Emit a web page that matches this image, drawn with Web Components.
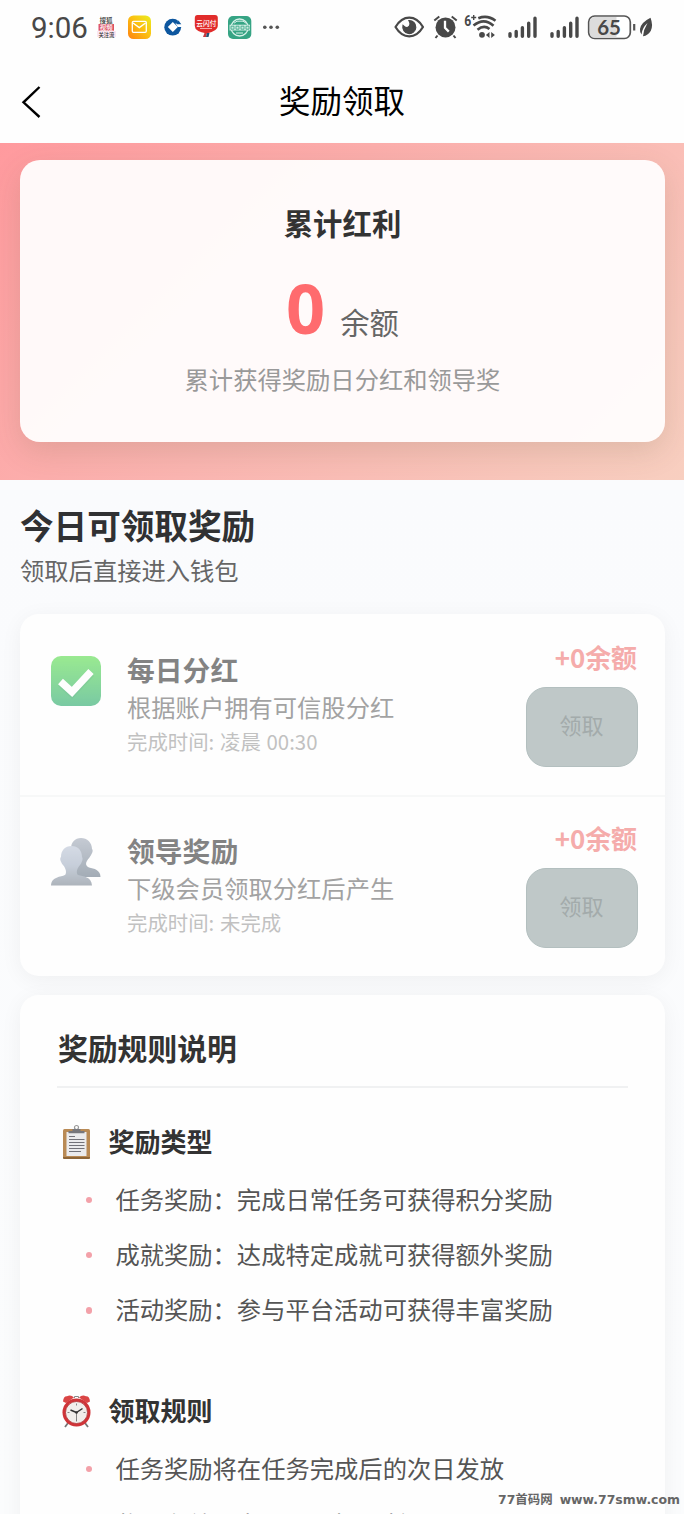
<!DOCTYPE html>
<html lang="zh-CN">
<head>
<meta charset="utf-8">
<title>奖励领取</title>
<style>
html,body{margin:0;height:1514px;overflow:hidden}
body{font-family:"Noto Sans CJK SC","Noto Sans",sans-serif;background:#fafbfd;color:#333}
</style>
</head>
<body>
<reward-page></reward-page>
<script>
function define(name, html) {
  customElements.define(name, class extends HTMLElement {
    constructor() {
      super();
      const t = document.createElement('template');
      t.innerHTML = html;
      this.attachShadow({mode: 'open'}).appendChild(t.content.cloneNode(true));
    }
  });
}

define('status-bar', `
<style>
:host{display:flex;height:54px;justify-content:space-between;align-items:flex-start;padding:0 29px 0 31px;box-sizing:border-box}
.left{display:flex}
.time{font:400 29.5px/54px Roboto,sans-serif;color:#484848;width:60px;margin-top:1px}
svg{display:block}
</style>
<div class="left">
<div class="time">9:06</div>
<svg width="195" height="54" viewBox="91 0 195 54">
  <defs>
    <linearGradient id="m" x1="0" y1="1" x2="1" y2="0"><stop offset="0" stop-color="#ff8210"/><stop offset=".55" stop-color="#fbc211"/><stop offset="1" stop-color="#e9ef22"/></linearGradient>
  </defs>
  <rect x="97" y="31" width="19" height="6" fill="#fbe6f1"/>
  <rect x="98.500" y="24" width="15.500" height="6.700" fill="#dd5264"/>
  <g font-family="Noto Sans CJK SC, sans-serif" font-weight="500">
  <text x="99.500" y="22.900" font-size="6.500" fill="#333">搜狐</text>
  <text x="99.800" y="29.700" font-size="6.400" fill="#fff">视频</text>
  <text x="98.500" y="36.700" font-size="5.300" fill="#333">关注流</text>
  </g>
  <rect x="128" y="15.500" width="23" height="23.500" rx="5.500" fill="url(#m)"/>
  <rect x="132.300" y="21.300" width="14" height="11" rx="1.200" fill="none" stroke="#fff" stroke-width="1.300"/>
  <path d="M133 23l6.300 4.600 6.300-4.600" fill="none" stroke="#fff" stroke-width="1.300"/>
  <circle cx="172.700" cy="27.200" r="8.400" fill="#0d579f"/>
  <path d="M172.800 22L167.800 27L172.800 32L177.800 27Z" fill="#fff"/>
  <path d="M175.500 23.800L178 21L183 25.800L181.500 27H177.800Z" fill="#fff"/>
  <path d="M175.800 22.500L178.300 20.500L181.300 24.200H176.800Z" fill="#0d579f"/>
  <path d="M197.500 15h17.500q2.800 0 2.800 3v8q0 5-11 7.500q-12-2-12-7.500v-8q0-3 2.700-3z" fill="#e12c2b"/>
  <text x="196.300" y="25.800" font-family="Noto Sans CJK SC, sans-serif" font-size="6.700" font-weight="500" fill="#fff">云闪付</text>
  <path d="M200 28.500h12" stroke="#f6aaaa" stroke-width="1"/>
  <path d="M204.500 33l-1.500 4h3l1-4z" fill="#c83a3e"/><path d="M207 33l-1 4h2.500l1-4z" fill="#235478"/>
  <rect x="228" y="16" width="23.300" height="23" rx="5" fill="#36a484"/>
  <circle cx="239.600" cy="27.500" r="8.500" fill="none" stroke="#d8f1e9" stroke-width="1.300"/>
  <rect x="229.500" y="24.700" width="20.500" height="5.800" fill="#ccebe1"/>
  <path d="M231 26.200h3v3h-3zM236 26.200h3v3h-3zM241 26.200h3v3h-3zM246 26.200h3v3h-3z" fill="none" stroke="#36a484" stroke-width=".8"/>
  <path d="M234 23.200l3-2h6l3 2M236 33h7" stroke="#d8f1e9" fill="none"/>
  <g fill="#555"><circle cx="264.800" cy="27.300" r="1.800"/><circle cx="271" cy="27.300" r="1.800"/><circle cx="277.300" cy="27.300" r="1.800"/></g>
</svg>
</div>
<svg width="262" height="54" viewBox="393 0 262 54">
  <path d="M395.500 27C403 14.500 415.500 14.500 423 27C415.500 39.500 403 39.500 395.500 27Z" fill="none" stroke="#484848" stroke-width="2.200" stroke-linejoin="round"/>
  <path d="M409 20.600A6.500 6.500 0 1 1 403 25.500Q406.500 29 409 26.500Q411 24 409 20.600Z" fill="#484848" stroke="#484848" stroke-width="1.200"/>
  <g fill="none" stroke="#484848" stroke-width="2">
    <path d="M434.300 20.500l5-4M451.700 16.500l5 4M437.500 35.500l-2 2.500M453.500 35.500l2 2.500"/>
  </g>
  <circle cx="445.500" cy="27.400" r="10" fill="#484848"/>
  <path d="M445 20.800v7l3.800 3.800" stroke="#fff" stroke-width="2.300" fill="none"/>
  <text x="464.300" y="25.500" font-family="Roboto, sans-serif" font-weight="700" font-size="14" fill="#484848" textLength="7" lengthAdjust="spacingAndGlyphs">6</text>
  <path d="M471.200 17.500h5M473.700 15v5" stroke="#484848" stroke-width="1.400"/>
  <g fill="none" stroke="#484848" stroke-width="2.600">
    <path d="M478.300 18.200Q487.500 14.500 495.500 20.700M473.500 25.500Q484 17 493.500 25.800M477.500 29.700Q484 24.500 489.500 29"/>
  </g>
  <circle cx="482" cy="34.800" r="2.900" fill="#484848"/>
  <path d="M489.500 32v6l-3.600-3zM491.200 32v6l3.700-3z" fill="#484848"/>
  <g stroke="#484848" stroke-width="3.400" stroke-linecap="round">
    <path d="M510 36.200v-2.600M516.200 36.200v-4.700M522.400 36.200v-8.500M528.700 36.200v-13M535 36.200v-18"/>
    <path d="M552 36.200v-2.600M558.200 36.200v-4.700M564.400 36.200v-8.500M570.700 36.200v-13M577 36.200v-18"/>
  </g>
  <rect x="588.700" y="16" width="41.600" height="22.500" rx="6" fill="#fff" stroke="#555" stroke-width="1.700"/>
  <path d="M595 17h21.500v20.500H595q-5.300 0-5.300-5.200v-10q0-5.300 5.300-5.300z" fill="#dcdcdc"/>
  <text x="597.200" y="34.800" font-family="Lato, sans-serif" font-weight="700" font-size="20.500" fill="#484848">65</text>
  <path d="M634.200 24v6.500" stroke="#555" stroke-width="2.200"/>
  <path d="M650.500 17.800Q641 22.500 640 29Q639.700 32.500 641.500 34.500Q642 28 647.500 23Q643.500 29.500 643 36.300Q648 35.500 650.700 31Q653.500 25.500 650.500 17.800Z" fill="#484848"/>
</svg>`);

define('nav-bar', `
<style>
:host{display:grid;grid-template-columns:60px 1fr 60px;height:89px;align-items:center;color:#000}
h1{margin:1px 0 0;text-align:center;font-weight:400;font-size:31.500px;line-height:46px}
svg{display:block;margin:7px 0 0 19px}
</style>
<svg width="24" height="36" viewBox="0 0 24 36"><path d="M20.500 3L4.500 18.300L20.500 33" fill="none" stroke="#000" stroke-width="2.400"/></svg>
<h1><slot></slot></h1>`);

define('balance-hero', `
<style>
:host{display:block;height:337px;box-sizing:border-box;padding:17px 19px 0 20px;background:linear-gradient(135deg,#ff9a9e 0%,#fbb5b1 50%,#f8cfc0 100%)}
.card{height:282px;box-sizing:border-box;border-radius:20px;background:rgba(255,252,252,.97);box-shadow:0 10px 30px rgba(80,90,50,.15);text-align:center;padding-top:41px}
.title{font-weight:700;font-size:29.400px;line-height:42px}
.amount{display:flex;justify-content:center;align-items:baseline;height:92px;line-height:92px;margin-top:19px;gap:15px}
.amount b{font-size:68.500px;color:#ff6b6e;font-family:"Noto Sans",sans-serif}
.amount span{font-size:29.300px;color:#666}
.note{font-size:24.300px;line-height:36px;color:#999;margin-top:7px}
</style>
<div class="card">
<div class="title">累计红利</div>
<div class="amount"><b>0</b><span>余额</span></div>
<div class="note">累计获得奖励日分红和领导奖</div>
</div>`);

define('section-heading', `
<style>
:host{display:block;padding:21px 20px 0;height:134px;box-sizing:border-box}
h2{margin:0;font-size:33.600px;line-height:48px;color:#303133}
p{margin:3px 0 0;font-size:24.300px;line-height:36px;color:#666}
</style>
<h2><slot></slot></h2><p><slot name="note"></slot></p>`);

define('emoji-icon', `
<style>:host{display:block}svg{display:none;width:100%;height:100%}
:host([name=check]) .check,:host([name=people]) .people,:host([name=clip]) .clip,:host([name=alarm]) .alarm{display:block}
</style>
<svg class="check" viewBox="0 0 50 50"><defs><linearGradient id="g" x2="0" y2="1"><stop stop-color="#58dd49"/><stop offset="1" stop-color="#22a767"/></linearGradient></defs>
<rect width="50" height="50" rx="10" fill="url(#g)"/><path d="M9.500 26.500L21 37L40.500 16.500" fill="none" stroke="#15824b" stroke-opacity=".25" stroke-width="7" transform="translate(0 1)"/><path d="M9.500 25.500L21 36L40 15.500" fill="none" stroke="#fff" stroke-width="7.200"/></svg>
<svg class="people" viewBox="0 0 50 50"><defs><linearGradient id="p" x2="0" y2="1"><stop stop-color="#bac4d5"/><stop offset=".5" stop-color="#a2afc2"/><stop offset="1" stop-color="#78838f"/></linearGradient><linearGradient id="q" x2="0" y2="1"><stop stop-color="#a0a9b8"/><stop offset="1" stop-color="#687787"/></linearGradient></defs>
<path d="M30 1C36 1 41 5.500 41 12C43 14 40 18 38.500 20.500C34 25.500 34 28.500 38 30.500C43 31.500 49.500 33 49.500 40H14L22 22L20 12C20 5 24 1 30 1Z" fill="url(#q)"/>
<path d="M20.500 9C27 9 31 13.500 31 20C32.500 22 30.500 26 29 28C25.500 32 25 36 27 38C32 39.500 40.500 39.500 41 48.500H0C.5 39.500 10 40 14 38C16 36 15 31.500 12 28C10.500 26 8 22 10 20C10 13.500 14 9 20.500 9Z" fill="url(#p)"/></svg>
<svg class="clip" viewBox="0 0 30 36"><circle cx="14.500" cy="3.500" r="2" fill="none" stroke="#999" stroke-width="1.200"/><rect x="1" y="5" width="27" height="30" rx="1.500" fill="#b98a55"/><path d="M1 33h27v.5q0 1.500-1.500 1.500h-24Q1 35 1 33.500z" fill="#8e6638"/><rect x="4.500" y="8" width="20" height="24" fill="#ebebed"/><path d="M10.500 5h8v2h4v2.300h-16V7h4z" fill="#77777c"/><path d="M7 12.500h6M7 15.500h15.500M7 18.500h15.500M7 21.500h15.500M7 24.500h15.500M7 27.500h12" stroke="#727279" stroke-width="1.100"/></svg>
<svg class="alarm" viewBox="0 0 30 36"><path d="M6 30l-3 4M23 30l3 4" stroke="#777" stroke-width="1.800"/><path d="M1 8.500Q1.500 3 5 3.200Q9 1.500 12 4.500L4 10ZM28 8.500Q27.500 3 24 3.200Q20 1.500 17 4.500L25 10Z" fill="#da4545"/><path d="M12.500 5V3.500h4V5" fill="none" stroke="#888"/><circle cx="14.500" cy="19.500" r="14" fill="#cf3438"/><circle cx="14.500" cy="19.500" r="11" fill="#f1eeeb" stroke="#aa2428" stroke-width=".7"/><path d="M14.500 10.500v2M14.500 26.500v2M5.500 19.500h2M21.500 19.500h2" stroke="#888"/><path d="M14.500 19.500L8.500 17M14.500 19.500L20.500 15.500" stroke="#333" stroke-width="1.500"/><path d="M14.500 19v9" stroke="#777" stroke-width=".9"/><circle cx="14.500" cy="19.500" r="1.300" fill="#333"/></svg>`);

define('surface-card', `
<style>:host{display:block;margin:0 19px 0 20px;background:#fefefe;border-radius:19px;box-shadow:0 4px 22px rgba(0,0,0,.05);overflow:hidden}</style><slot></slot>`);

define('reward-row', `
<style>
:host{display:flex;height:181px;box-sizing:border-box;padding:27px 27px 0 31px}
emoji-icon{width:50px;height:50px;margin:15px 26px 0 0;opacity:.6}
.text{flex:1;opacity:.6;padding-top:7px}
.t{font-weight:700;font-size:27.800px;line-height:42px;color:#333}
.d{font-size:24.300px;line-height:36px;color:#666;margin-top:-1px}
.c{font-size:20.400px;line-height:30px;color:#999;margin-top:1px;word-spacing:1.2px}
.side{display:flex;flex-direction:column;align-items:flex-end}
.a{font-weight:700;font-size:25.900px;line-height:36px;color:#f5acab;margin-right:1px;margin-top:-2px}
button{width:112px;height:80px;margin:12px 0 0;border:1px solid #b3bfbf;border-radius:20px;background:#bfc8c8;color:#a3abab;font:400 22px/36px "Noto Sans CJK SC",sans-serif;padding:0 1px 6px 0}
</style>
<emoji-icon></emoji-icon>
<div class="text"><div class="t"><slot name="title"></slot></div><div class="d"><slot name="desc"></slot></div><div class="c"><slot name="time"></slot></div></div>
<div class="side"><div class="a">+0余额</div><button>领取</button></div>`);

define('rule-group', `
<style>
:host{display:block;padding-top:32px}
header{display:flex;align-items:center;height:42px}
emoji-icon{width:30px;height:36px;margin:2px 17px 0 4.500px}
h4{margin:0;font-size:26px;line-height:42px;color:#333}
</style>
<header><emoji-icon></emoji-icon><h4><slot name="title"></slot></h4></header>
<slot></slot>`);

define('rule-item', `
<style>
:host{display:flex;align-items:center;height:55.200px;font-size:24.300px;line-height:36px;color:#555;white-space:nowrap}
i{width:6.400px;height:6.400px;border-radius:50%;background:#f3a1a9;margin:3px 23px 0 29px;flex:none}
</style><i></i><span><slot></slot></span>`);

define('rules-panel', `
<style>
:host{display:block;padding:31px 37px 0 37px;height:700px;box-sizing:border-box}
h3{margin:0;padding:0 0 18px 1px;font-size:29.800px;line-height:42px;color:#333;border-bottom:2px solid #f0f1f2}
.list{padding-top:9px}
rule-group+rule-group{margin-top:20.500px}
</style>
<h3>奖励规则说明</h3>
<rule-group icon="clip"><span slot="title">奖励类型</span><div class="list">
<rule-item>任务奖励：完成日常任务可获得积分奖励</rule-item>
<rule-item>成就奖励：达成特定成就可获得额外奖励</rule-item>
<rule-item>活动奖励：参与平台活动可获得丰富奖励</rule-item></div></rule-group>
<rule-group icon="alarm"><span slot="title">领取规则</span><div class="list">
<rule-item>任务奖励将在任务完成后的次日发放</rule-item>
<rule-item style="margin-top:1px">奖励有效期为7天，请及时领取</rule-item></div></rule-group>`);

define('site-watermark', `
<style>:host{position:absolute;right:4px;bottom:4px;display:flex;align-items:center;gap:7px;line-height:20px;font-weight:700;color:#666;font-size:12.450px;white-space:nowrap}
span{font-family:"DejaVu Sans","Noto Sans CJK SC",sans-serif}</style>
<span>77首码网</span><span>www.77smw.com</span>`);

define('reward-page', `
<style>
:host{display:block;position:relative;width:684px;height:1514px;overflow:hidden;background:linear-gradient(#fafbfd 480px,#fbfcfd)}
.top{background:#fefefe}
surface-card+surface-card{margin-top:19px}
reward-row+reward-row{box-shadow:inset 0 2px #f7f8f8}
</style>
<div class="top"><status-bar></status-bar><nav-bar>奖励领取</nav-bar></div>
<balance-hero></balance-hero>
<section-heading>今日可领取奖励<span slot="note">领取后直接进入钱包</span></section-heading>
<surface-card>
<reward-row icon="check"><span slot="title">每日分红</span><span slot="desc">根据账户拥有可信股分红</span><span slot="time">完成时间: 凌晨 00:30</span></reward-row>
<reward-row icon="people"><span slot="title">领导奖励</span><span slot="desc">下级会员领取分红后产生</span><span slot="time">完成时间: 未完成</span></reward-row>
</surface-card>
<surface-card><rules-panel></rules-panel></surface-card>
<site-watermark></site-watermark>`);

(function passIcons(root) {
  root.querySelectorAll('*').forEach(el => {
    if (!el.shadowRoot) return;
    const icon = el.getAttribute('icon');
    if (icon) el.shadowRoot.querySelector('emoji-icon').setAttribute('name', icon);
    passIcons(el.shadowRoot);
  });
})(document);
</script>
</body>
</html>
